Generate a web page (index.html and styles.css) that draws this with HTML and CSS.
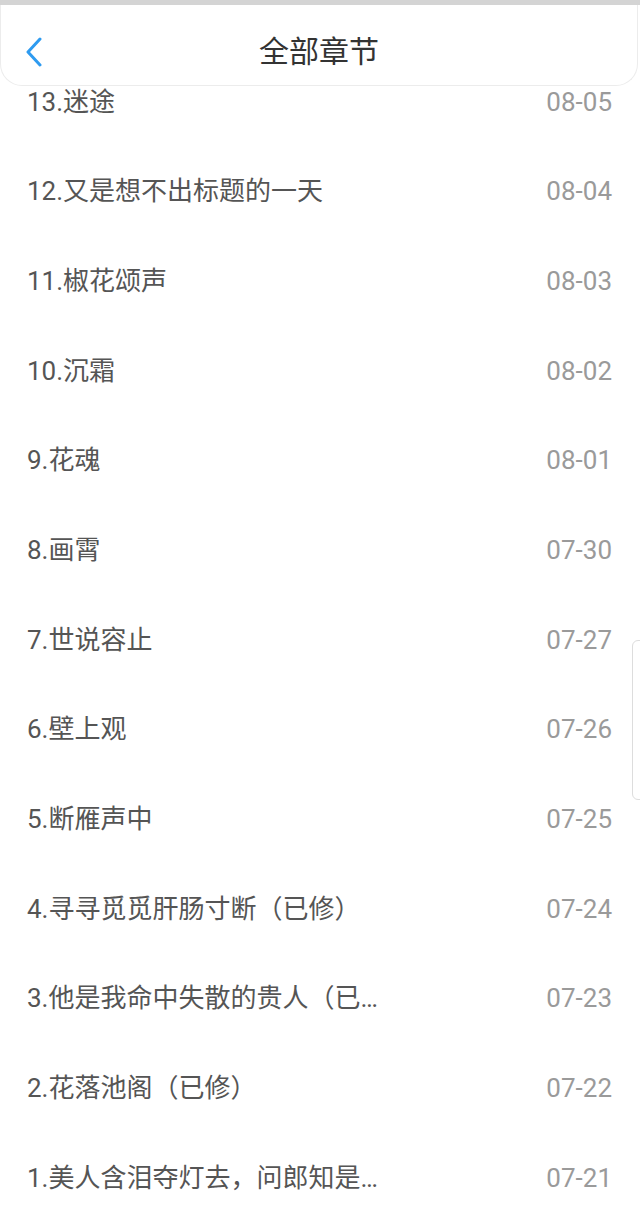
FILE: index.html
```html
<!DOCTYPE html>
<html lang="zh-CN">
<head>
<meta charset="utf-8">
<title>全部章节</title>
<link rel="stylesheet" href="styles.css">
</head>
<body>
<div class="page">
  <div class="status"></div>
  <header class="header">
    <svg class="back" width="20" height="30" viewBox="0 0 20 30" aria-hidden="true">
      <polyline points="15,2 3,15 15,28" fill="none" stroke="#2e9bf0" stroke-width="3" stroke-linecap="round" stroke-linejoin="round"/>
    </svg>
    <h1 class="title">全部章节</h1>
  </header>
  <ul class="list">
    <li class="row"><span class="name">13.迷途</span><span class="date">08-05</span></li>
    <li class="row"><span class="name">12.又是想不出标题的一天</span><span class="date">08-04</span></li>
    <li class="row"><span class="name">11.椒花颂声</span><span class="date">08-03</span></li>
    <li class="row"><span class="name">10.沉霜</span><span class="date">08-02</span></li>
    <li class="row"><span class="name">9.花魂</span><span class="date">08-01</span></li>
    <li class="row"><span class="name">8.画霄</span><span class="date">07-30</span></li>
    <li class="row"><span class="name">7.世说容止</span><span class="date">07-27</span></li>
    <li class="row"><span class="name">6.壁上观</span><span class="date">07-26</span></li>
    <li class="row"><span class="name">5.断雁声中</span><span class="date">07-25</span></li>
    <li class="row"><span class="name">4.寻寻觅觅肝肠寸断（已修）</span><span class="date">07-24</span></li>
    <li class="row"><span class="name">3.他是我命中失散的贵人（已…</span><span class="date">07-23</span></li>
    <li class="row"><span class="name">2.花落池阁（已修）</span><span class="date">07-22</span></li>
    <li class="row"><span class="name">1.美人含泪夺灯去，问郎知是…</span><span class="date">07-21</span></li>
  </ul>
  <div class="scroll-handle"></div>
</div>
</body>
</html>
```

FILE: styles.css
```css
* { box-sizing: border-box; }
html, body {
  margin: 0;
  padding: 0;
  background: #ffffff;
}
body {
  font-family: Roboto, "Noto Sans CJK SC", sans-serif;
  width: 640px;
  height: 1215px;
  overflow: hidden;
}
.page {
  position: relative;
  width: 640px;
  height: 1215px;
  overflow: hidden;
}
.status {
  position: relative;
  z-index: 3;
  height: 5px;
  background: #d4d4d4;
}
.header {
  position: absolute;
  z-index: 2;
  top: 5px;
  left: 0;
  width: 638px;
  height: 81px;
  background: #ffffff;
  border: 1px solid #ececec;
  border-top: none;
  border-radius: 0 0 22px 22px;
  display: flex;
  align-items: center;
  justify-content: center;
}
.back {
  position: absolute;
  left: 24px;
  top: 32px;
}
.title {
  margin: 13px 0 0 0;
  font-size: 30px;
  font-weight: 400;
  color: #333333;
  line-height: 1;
}
.list {
  list-style: none;
  margin: 0;
  padding: 52px 0 0 0;
}
.row {
  height: 89.67px;
  display: flex;
  align-items: center;
  justify-content: space-between;
  padding: 0 28px 0 27px;
  font-size: 26px;
  line-height: 1;
}
.name {
  color: #555555;
  white-space: nowrap;
}
.date {
  color: #9a9a9a;
}
.scroll-handle {
  position: absolute;
  z-index: 2;
  left: 632px;
  top: 640px;
  width: 20px;
  height: 160px;
  border: 1px solid #dddddd;
  border-radius: 6px;
  background: #ffffff;
}
```
